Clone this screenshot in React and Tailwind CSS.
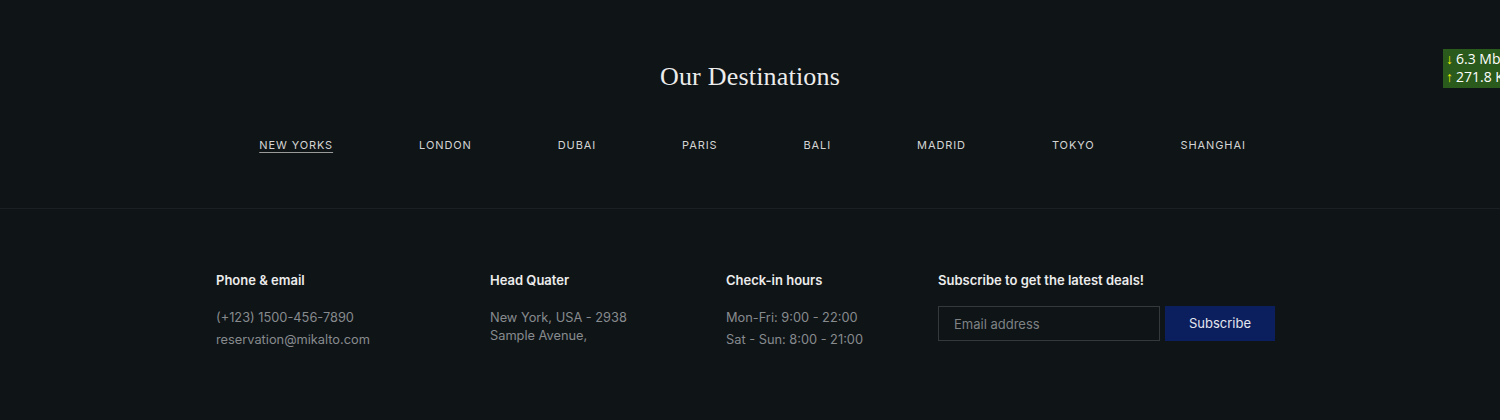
import React from 'react';

const destinations = ['New Yorks', 'London', 'Dubai', 'Paris', 'Bali', 'Madrid', 'Tokyo', 'Shanghai'];

const sans = { fontFamily: 'Inter, "Noto Sans", sans-serif' };

const NetSpeed = () => (
  // overlay widget sitting on top of the page
  <div className="absolute right-0 top-[49px] w-[57px] h-[39px] overflow-hidden bg-[#2a5a1c] text-white text-[14px] leading-[18px] pl-[3px] pt-[1px] whitespace-nowrap" style={{ fontFamily: '"Open Sans", "Noto Sans", sans-serif' }}>
    <div><span className="inline-block w-[10px] text-[#f5f000] text-[14px] font-bold">↓</span>6.3 Mb</div>
    <div><span className="inline-block w-[10px] text-[#f5f000] text-[14px] font-bold">↑</span>271.8 Kb</div>
  </div>
);

const FooterCol = ({ title, lines, width }) => (
  <div className={width}>
    <h4 className="text-[13px] font-semibold text-[#ececec] leading-5">{title}</h4>
    <div className="mt-[17px] text-[12.8px] text-[#878b8e] leading-[22px]">
      {lines}
    </div>
  </div>
);

export default function App() {
  return (
    <div className="relative w-[1500px] h-[420px] bg-[#0f1417] overflow-hidden" style={sans}>
      <NetSpeed />

      <section className="h-[209px] border-b border-[#1b2024] pt-[59px]">
        <h2 className="text-center text-[26px] text-[#ececec] leading-9 tracking-[0.2px]" style={{ fontFamily: '"Liberation Serif", "DejaVu Serif", serif' }}>
          Our Destinations
        </h2>
        <nav className="mt-[42px] flex justify-center gap-[86px] pl-[5px]">
          {destinations.map((d, i) => (
            <a
              key={d}
              href="#"
              className={`text-[11px] uppercase tracking-[0.9px] text-[#d4d4d4] leading-4 ${i === 0 ? 'underline underline-offset-[3px] decoration-[#9a9a9a]' : ''}`}
            >
              {d}
            </a>
          ))}
        </nav>
      </section>

      <footer className="flex pl-[216px] pt-[61px]">
        <FooterCol
          title="Phone & email"
          width="w-[274px]"
          lines={<><p>(+123) 1500-456-7890</p><p>reservation@mikalto.com</p></>}
        />
        <FooterCol
          title="Head Quater"
          width="w-[236px]"
          lines={<p className="leading-[18px] pt-[2px]">New York, USA - 2938<br />Sample Avenue,</p>}
        />
        <FooterCol
          title="Check-in hours"
          width="w-[212px]"
          lines={<><p>Mon-Fri: 9:00 - 22:00</p><p>Sat - Sun: 8:00 - 21:00</p></>}
        />
        <div>
          <h4 className="text-[13px] font-semibold text-[#ececec] leading-5">Subscribe to get the latest deals!</h4>
          <form className="mt-[16px] flex gap-[5px]" onSubmit={(e) => e.preventDefault()}>
            <input
              type="email"
              placeholder="Email address"
              className="w-[222px] h-[35px] bg-transparent border border-[#34393c] px-[15px] text-[13px] text-[#ddd] placeholder:text-[#7e8285] outline-none"
            />
            <button className="w-[110px] h-[35px] bg-[#0b1f5e] text-[13px] text-[#e4e6ee]">Subscribe</button>
          </form>
        </div>
      </footer>
    </div>
  );
}
